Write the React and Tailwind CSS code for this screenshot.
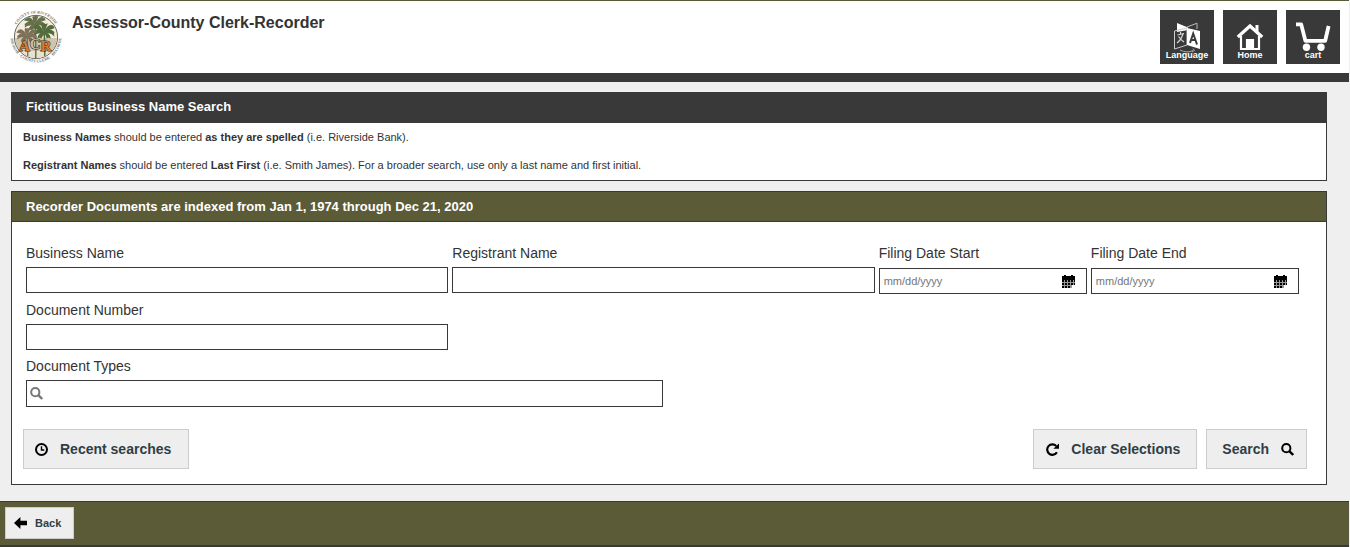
import { useState } from "react";

const Palm = ({ x, y, scale, color, trunk }) => (
  <g transform={`translate(${x} ${y}) scale(${scale})`} fill={color}>
    <path d={`M-0.8 0 Q0.6 ${trunk / 2} -0.2 ${trunk} H1.4 Q2 ${trunk / 2} 1 0Z`} />
    <path d="M0 0Q-5 -6 -11 0Q-10 2 -11 4Q-7 0 0 2Z" />
    <path d="M0 0Q5 -6 11 0Q10 2 11 5Q7 0 0 2Z" />
    <path d="M0 0Q-4 -9 -9 -7Q-11 -5 -12 -4Q-5 -3 0 1Z" />
    <path d="M0 0Q4 -9 9 -7Q11 -6 11 -4Q5 -3 0 1Z" />
    <path d="M0 0Q-4 -6 -2 -9Q1 -8 4 -9Q2 -5 1 0Z" />
    <path d="M0 0Q-6 0 -7 7Q-4 5 -3 7Q-1 3 1 1Z" />
    <path d="M0 0Q7 1 7 7Q4 5 3 7Q2 3 0 1Z" />
  </g>
);

const CountySeal = () => (
  <svg
    width="52"
    height="54"
    viewBox="0 0 52 54"
    className="overflow-visible"
    role="img"
    aria-label="County of Riverside Assessor-County Clerk-Recorder"
  >
    <defs>
      <path id="sealTop" d="M3.4 26a22.6 22.6 0 0 1 45.2 0" />
      <path id="sealBottom" d="M0.6 27a25.4 25.4 0 0 0 50.8 0" />
      <clipPath id="sealClip">
        <circle cx="26" cy="27" r="21" />
      </clipPath>
    </defs>
    <circle cx="26" cy="27" r="21.6" fill="#f3eddc" stroke="#66665f" strokeWidth="1" />
    <g clipPath="url(#sealClip)">
      <path d="M4 28H48V50H4Z" fill="#cfc5aa" />
      <path d="M4 41H48V50H4Z" fill="#e8e1cd" />
      <Palm x={25} y={14} scale={0.95} color="#66704a" trunk={40} />
      <Palm x={34} y={22} scale={0.95} color="#536b3d" trunk={30} />
      <Palm x={17} y={26} scale={0.9} color="#7d7259" trunk={26} />
    </g>
    <g fontFamily="Liberation Serif, serif" fontWeight="700" stroke="#3c3128" strokeWidth="1.2" style={{ paintOrder: "stroke" }}>
      <text x="9" y="41" fontSize="15" fill="#dd7a2e">A</text>
      <text x="19.8" y="39" fontSize="15" fill="#c9baa2">C</text>
      <text x="30.6" y="41" fontSize="15" fill="#dd7a2e">R</text>
    </g>
    <g fontFamily="Liberation Serif, serif" fontWeight="700" fill="#73736e">
      <text textAnchor="middle" fontSize="4">
        <textPath href="#sealTop" startOffset="50%">COUNTY OF RIVERSIDE</textPath>
      </text>
      <text textAnchor="middle" fontSize="4">
        <textPath href="#sealBottom" startOffset="50%">ASSESSOR · COUNTY CLERK · RECORDER</textPath>
      </text>
    </g>
  </svg>
);

const LanguageIcon = () => (
  <svg width="28" height="32" viewBox="0 0 28 32" fill="none">
    <path d="M4 1L15 5.5V8L4 10Z" fill="#fff" />
    <path d="M14 5L24 1.2V7" stroke="#bbb" strokeWidth="1" />
    <path d="M1.5 9L14 6V23L1.5 27Z" stroke="#ccc" strokeWidth="1" />
    <path d="M14 6L27 9V27L14 23Z" fill="#fff" />
    <path d="M4.5 13L11 11.5M7.5 10V12.3M10 12Q8 18 4 21M5.5 14.5Q8 18 11 20" stroke="#d6d6d6" strokeWidth="1.2" />
    <path d="M17 21L20.2 11.5L24 22.5M18.2 18H22.3" stroke="#393939" strokeWidth="2" />
    <path d="M7 28Q14 31.5 20 28.5M20 26.5L21.5 28.5L19 30" stroke="#aaa" strokeWidth="1" />
  </svg>
);

const HomeIcon = () => (
  <svg width="28" height="30" viewBox="0 0 28 30" fill="none">
    <path d="M5 14V27H11V18H17V27H23V14" stroke="#fff" strokeWidth="2.2" />
    <path d="M11 18H17V28H11Z" fill="#fff" />
    <path d="M1.8 15L14 4L26.2 15" stroke="#fff" strokeWidth="3.2" />
    <path d="M19.5 3H22.5V11L19.5 8.5Z" fill="#fff" />
  </svg>
);

const CartIcon = () => (
  <svg width="36" height="32" viewBox="0 0 36 32" fill="none">
    <path d="M1 2.4H6.2L10.4 18.8H30.2L33.6 4" stroke="#fff" strokeWidth="3.8" strokeLinejoin="round" />
    <circle cx="11.5" cy="25.2" r="3.7" fill="#fff" />
    <circle cx="26" cy="25.2" r="3.7" fill="#fff" />
  </svg>
);

const CalendarIcon = () => (
  <svg width="14" height="13" viewBox="0 0 14 13">
    <path d="M0 1H2V0H4V1H9V0H11V1H13V5H0Z" />
    <path d="M0 5H13V10H10V13H0Z" fill="#999" />
    {[5, 8, 11].map((y) =>
      [0, 3, 6, 9, 12].map((x) =>
        y === 11 && x > 8 ? null : <rect key={`${x}-${y}`} x={x} y={y} width={x === 12 ? 1 : 2} height="2" />
      )
    )}
  </svg>
);

const SearchIcon = ({ color = "#000" }) => (
  <svg width="13" height="13" viewBox="0 0 13 13" fill="none" stroke={color} strokeWidth="2">
    <circle cx="5.3" cy="5.2" r="4.1" />
    <path d="M8.2 8.2L12.2 12" strokeWidth="2.4" />
  </svg>
);

const ClockIcon = () => (
  <svg width="13" height="13" viewBox="0 0 13 13" fill="none" stroke="#000">
    <circle cx="6.5" cy="6.5" r="5.5" strokeWidth="2" />
    <path d="M6.5 3.2V7H9.3" strokeWidth="1.4" />
  </svg>
);

const RefreshIcon = () => (
  <svg width="13" height="13" viewBox="0 0 13 13">
    <path d="M10.9 9.2A5.2 5.2 0 1 1 10.2 3" fill="none" stroke="#000" strokeWidth="2.2" />
    <path d="M13 0.4V5.8H7.4Z" />
  </svg>
);

const ArrowLeftIcon = () => (
  <svg width="13" height="12" viewBox="0 0 13 12">
    <path d="M0 6L6.4 0V3.8H13V8.2H6.4V12Z" />
  </svg>
);

const navItems = [
  { label: "Language", Icon: LanguageIcon },
  { label: "Home", Icon: HomeIcon },
  { label: "cart", Icon: CartIcon },
];

const inputClass = "block w-full h-[26px] border border-[#393939] bg-white px-1 text-[11px] outline-none";
const labelClass = "block text-sm leading-5 text-[#333]";
const actionClass =
  "flex h-10 items-center border border-[#ccc] bg-[#eee] text-sm font-bold text-[#2f3e46] cursor-pointer";

const TextField = ({ id, label, value, onChange }) => (
  <div className="space-y-1">
    <label htmlFor={id} className={labelClass}>{label}</label>
    <input id={id} type="text" className={inputClass} value={value} onChange={onChange} />
  </div>
);

const DateField = ({ id, label, value, onChange }) => (
  <div className="space-y-[5px]">
    <label htmlFor={id} className={labelClass}>{label}</label>
    <div className="flex h-[26px] items-center border border-[#393939] bg-white pl-1 pr-1.5">
      <input
        id={id}
        type="text"
        placeholder="mm/dd/yyyy"
        className="min-w-0 flex-1 text-[11px] outline-none placeholder:text-[#757575]"
        value={value}
        onChange={onChange}
      />
      <button type="button" aria-label={`Choose ${label}`} className="cursor-pointer px-1">
        <CalendarIcon />
      </button>
    </div>
  </div>
);

const emptyForm = { business: "", registrant: "", start: "", end: "", number: "", types: "" };

export default function App() {
  const [form, setForm] = useState(emptyForm);

  const bind = (name) => ({
    id: name,
    value: form[name],
    onChange: (e) => setForm({ ...form, [name]: e.target.value }),
  });

  return (
    <div className="flex min-h-screen flex-col bg-[#efefef] font-['Liberation_Sans',Arial,sans-serif] text-[#333]">
      <header className="mr-px flex items-start justify-between border-t border-b-9 border-t-[#5b5b38] border-b-[#393939] bg-white pb-[9px] pl-2.5 pr-[9px] pt-[9px]">
        <div className="flex items-start gap-2.5">
          <CountySeal />
          <h1 className="pt-[3px] text-base leading-5 font-bold">Assessor-County Clerk-Recorder</h1>
        </div>
        <nav className="flex gap-[9px]">
          {navItems.map(({ label, Icon }) => (
            <a key={label} href="#" className="relative flex size-[54px] justify-center bg-[#393939] pt-3">
              <Icon />
              <span className="absolute inset-x-0 bottom-1 text-center text-[9px] leading-[10px] font-bold text-white">
                {label}
              </span>
            </a>
          ))}
        </nav>
      </header>

      <main className="flex-1 pb-[15px] pl-[11px] pr-[23px] pt-2.5">
        <section className="border border-[#393939] bg-white">
          <h2 className="bg-[#393939] px-3.5 pb-[7px] pt-[5px] text-[13px] leading-[18px] font-bold text-white">
            Fictitious Business Name Search
          </h2>
          <div className="space-y-3.5 px-[11px] pb-2 pt-[7px] text-[11px] leading-[14px]">
            <p><b>Business Names</b> should be entered <b>as they are spelled</b> (i.e. Riverside Bank).</p>
            <p>
              <b>Registrant Names</b> should be entered <b>Last First</b> (i.e. Smith James). For a broader search, use
              only a last name and first initial.
            </p>
          </div>
        </section>

        <section className="mt-2.5 border border-[#393939] bg-white">
          <h2 className="border-b border-[#393939] bg-[#5b5b38] px-3.5 pb-[5px] pt-1.5 text-[13px] leading-[18px] font-bold text-white">
            Recorder Documents are indexed from Jan 1, 1974 through Dec 21, 2020
          </h2>
          <form onSubmit={(e) => e.preventDefault()}>
            <div className="pl-3.5 pr-[27px] pt-[21px]">
              <div className="grid grid-cols-[422fr_422fr_208fr_208fr] gap-x-1 gap-y-1.5">
                <TextField label="Business Name" {...bind("business")} />
                <TextField label="Registrant Name" {...bind("registrant")} />
                <DateField label="Filing Date Start" {...bind("start")} />
                <DateField label="Filing Date End" {...bind("end")} />
                <TextField label="Document Number" {...bind("number")} />
              </div>
              <div className="mt-1.5 w-1/2 space-y-1">
                <label htmlFor="types" className={labelClass}>Document Types</label>
                <div className="flex h-[27px] items-center gap-1 border border-[#393939] px-[3px]">
                  <SearchIcon color="#777" />
                  <input type="text" className="min-w-0 flex-1 text-[11px] outline-none" {...bind("types")} />
                </div>
              </div>
            </div>
            <div className="mt-[22px] flex justify-between pb-[15px] pl-[11px] pr-[19px]">
              <button type="button" className={`${actionClass} gap-3 pl-[11px] pr-[17px]`}>
                <ClockIcon />
                Recent searches
              </button>
              <div className="flex gap-[9px]">
                <button type="button" className={`${actionClass} gap-3 pl-3 pr-4`} onClick={() => setForm(emptyForm)}>
                  <RefreshIcon />
                  Clear Selections
                </button>
                <button type="submit" className={`${actionClass} gap-3 pl-[15px] pr-3`}>
                  Search
                  <SearchIcon />
                </button>
              </div>
            </div>
          </form>
        </section>
      </main>

      <footer className="mr-px border-t border-b-2 border-[#393939] bg-[#5b5b38] pb-1.5 pl-[5px] pt-[5px]">
        <button
          type="button"
          className="flex h-8 items-center gap-2 border border-[#ccc] bg-[#eee] pl-2 pr-3 text-[11px] font-bold text-[#2f3e46] cursor-pointer"
        >
          <ArrowLeftIcon />
          Back
        </button>
      </footer>
    </div>
  );
}
